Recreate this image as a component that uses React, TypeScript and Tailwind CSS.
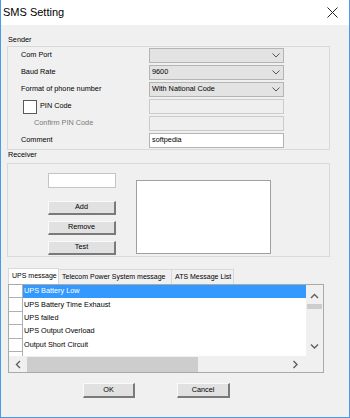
import React from 'react'

const Arrow = ({ dir }: { dir: 'up' | 'down' | 'left' | 'right' }) => {
  const d = {
    up: 'M1 5 L4.5 1.5 L8 5',
    down: 'M1 1.5 L4.5 5 L8 1.5',
    left: 'M5 1 L1.5 4.5 L5 8',
    right: 'M1.5 1 L5 4.5 L1.5 8',
  }[dir]
  const horiz = dir === 'left' || dir === 'right'
  return (
    <svg width={horiz ? 7 : 9} height={horiz ? 9 : 7} viewBox={horiz ? '0 0 7 9' : '0 0 9 7'}>
      <path d={d} fill="none" stroke="#5f5f5f" strokeWidth="1.4" />
    </svg>
  )
}

const Combo = ({ value }: { value?: string }) => (
  <div className="w-[135px] h-[15px] bg-[#e3e3e3] border border-[#b4b4b4] flex items-center justify-between pl-[2px] pr-[3px]">
    <span>{value}</span>
    <svg width="8" height="5" viewBox="0 0 8 5">
      <path d="M0.5 0.5 L4 4 L7.5 0.5" fill="none" stroke="#555" strokeWidth="1" />
    </svg>
  </div>
)

const Btn = ({ label, size }: { label: string; size: string }) => (
  <div className={`${size} bg-[#e1e1e1] border-t border-l border-[#fafafa] border-r-2 border-b-2 border-r-[#7a7a7a] border-b-[#7a7a7a] flex items-center justify-center`}>
    {label}
  </div>
)

const messages = ['UPS Battery Low', 'UPS Battery Time Exhaust', 'UPS failed', 'UPS Output Overload', 'Output Short Circuit']

export default function App() {
  return (
    <div className="w-[350px] h-[418px] flex flex-col border-x border-b border-[#4c9ae6] font-['Liberation_Sans',Arial,sans-serif] text-[7.3px] text-black bg-[#f0f0f0]">
      <div className="h-[25px] shrink-0 bg-white flex items-center justify-between pl-[2px] pr-[11px]">
        <span className="text-[11px] leading-none pb-[1px]">SMS Setting</span>
        <svg width="11" height="11" viewBox="0 0 11 11">
          <path d="M0.5 0.5 L10.5 10.5 M10.5 0.5 L0.5 10.5" stroke="#222" strokeWidth="1" />
        </svg>
      </div>

      <div className="flex-1 flex flex-col pl-[6px]">
        <div className="pt-[10px] h-[20px] leading-[10px] pl-[1px]">Sender</div>
        <div className="mt-[1px] w-[323px] border border-[#d9d9d9] pt-[1px] pb-[1px] flex flex-col gap-[2px]">
          <div className="flex items-center h-[15px]">
            <span className="w-[141px] pl-[13px]">Com Port</span>
            <Combo />
          </div>
          <div className="flex items-center h-[15px]">
            <span className="w-[141px] pl-[13px]">Baud Rate</span>
            <Combo value="9600" />
          </div>
          <div className="flex items-center h-[15px]">
            <span className="w-[141px] pl-[13px]">Format of phone number</span>
            <Combo value="With National Code" />
          </div>
          <div className="flex items-center h-[15px]">
            <div className="w-[141px] pl-[15px] flex items-center gap-[3px]">
              <div className="w-[14px] h-[14px] bg-white border border-[#5a5a5a]" />
              <span>PIN Code</span>
            </div>
            <div className="w-[135px] h-[15px] bg-[#efefef] border border-[#cbcbcb]" />
          </div>
          <div className="flex items-center h-[15px]">
            <span className="w-[141px] pl-[26px] text-[#7a7a7a]">Confirm PIN Code</span>
            <div className="w-[135px] h-[15px] bg-[#efefef] border border-[#cbcbcb]" />
          </div>
          <div className="flex items-center h-[15px]">
            <span className="w-[141px] pl-[13px]">Comment</span>
            <div className="w-[135px] h-[15px] bg-white border border-[#b4b4b4] flex items-center pl-[2px]">softpedia</div>
          </div>
        </div>

        <div className="h-[10px] leading-[10px] pl-[1px]">Receiver</div>
        <div className="mt-[3px] w-[323px] h-[94px] border border-[#d9d9d9] flex">
          <div className="ml-[40px] w-[68px] pt-[9px] flex flex-col">
            <div className="h-[15px] bg-white border border-[#c4c4c4]" />
            <div className="mt-[13px]"><Btn label="Add" size="w-[68px] h-[14px]" /></div>
            <div className="mt-[6px]"><Btn label="Remove" size="w-[68px] h-[14px]" /></div>
            <div className="mt-[6px]"><Btn label="Test" size="w-[68px] h-[14px]" /></div>
          </div>
          <div className="ml-[20px] mt-[16px] w-[135px] h-[74px] bg-white border border-[#a0a0a0]" />
        </div>

        <div className="mt-[12px] ml-[1px] flex items-end h-[15px] whitespace-nowrap text-[7px]">
          <div className="w-[51px] h-[16px] bg-white border border-b-0 border-[#d9d9d9] flex items-center pl-[3px]">UPS message</div>
          <div className="w-[113px] h-[15px] border border-l-0 border-b-0 border-[#d9d9d9] flex items-center pl-[3px]">Telecom Power System message</div>
          <div className="w-[62px] h-[15px] border border-l-0 border-b-0 border-[#d9d9d9] flex items-center pl-[3px]">ATS Message List</div>
        </div>
        <div className="ml-[1px] w-[316px] h-[89px] border border-[#a9a9a9] bg-white flex flex-col">
          <div className="flex h-[71px]">
            <div className="flex-1 flex">
              <div className="w-[14px] flex flex-col border-r border-[#b0b0b0]">
                {messages.map(m => (
                  <div key={m} className="h-[13.4px] bg-white border-b border-[#b0b0b0]" />
                ))}
              </div>
              <div className="flex-1 flex flex-col">
                {messages.map((m, i) => (
                  <div key={m} className={`h-[13.4px] flex items-center pl-[1px] ${i === 0 ? 'bg-[#3399ff] text-white' : ''}`}>{m}</div>
                ))}
              </div>
            </div>
            <div className="w-[17px] bg-[#f0f0f0] flex flex-col items-center">
              <div className="mt-[8px]"><Arrow dir="up" /></div>
              <div className="mt-[4px] w-[15px] h-[5px] bg-[#cdcdcd]" />
              <div className="mt-auto mb-[6px]"><Arrow dir="down" /></div>
            </div>
          </div>
          <div className="h-[16px] bg-[#f0f0f0] flex items-center">
            <div className="w-[17px] flex justify-center pl-[2px]"><Arrow dir="left" /></div>
            <div className="ml-[1px] w-[171px] h-[15px] bg-[#cdcdcd]" />
            <div className="ml-auto mr-[24px]"><Arrow dir="right" /></div>
          </div>
        </div>

        <div className="mt-[10px] flex">
          <div className="ml-[76px]"><Btn label="OK" size="w-[52px] h-[15px]" /></div>
          <div className="ml-[42px]"><Btn label="Cancel" size="w-[53px] h-[15px]" /></div>
        </div>
      </div>
    </div>
  )
}
